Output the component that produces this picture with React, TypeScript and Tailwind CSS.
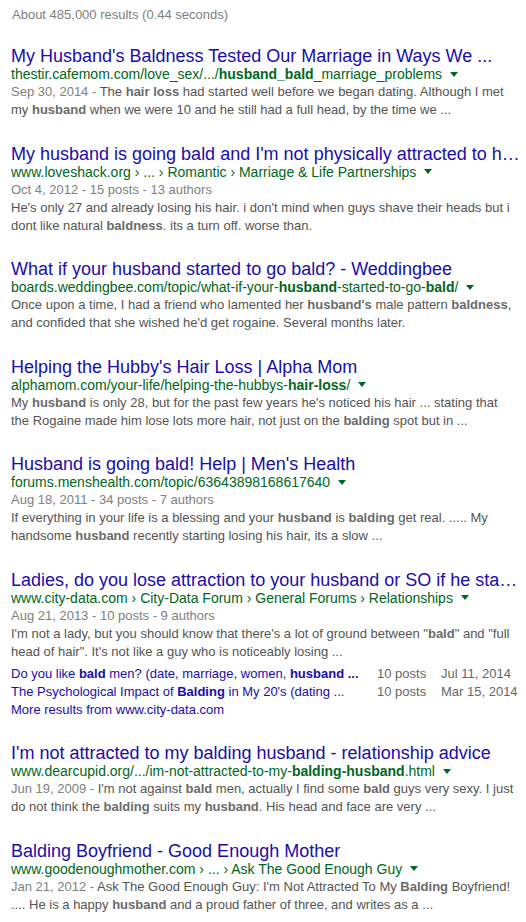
import React from "react";

type Seg = string | { b: string };

interface Result {
  title: string;
  url: Seg[];
  meta?: string;
  lines: Seg[][];
  date?: string;
  sitelinks?: { text: Seg[]; posts: string; date: string }[];
  more?: string;
}

const results: Result[] = [
  {
    title: "My Husband's Baldness Tested Our Marriage in Ways We ...",
    url: ["thestir.cafemom.com/love_sex/.../", { b: "husband_bald" }, "_marriage_problems"],
    date: "Sep 30, 2014 - ",
    lines: [
      ["The ", { b: "hair loss" }, " had started well before we began dating. Although I met"],
      ["my ", { b: "husband" }, " when we were 10 and he still had a full head, by the time we ..."],
    ],
  },
  {
    title: "My husband is going bald and I'm not physically attracted to h\u2026",
    url: ["www.loveshack.org \u203a ... \u203a Romantic \u203a Marriage & Life Partnerships"],
    meta: "Oct 4, 2012 - 15 posts - 13 authors",
    lines: [
      ["He's only 27 and already losing his hair. i don't mind when guys shave their heads but i"],
      ["dont like natural ", { b: "baldness" }, ". its a turn off. worse than."],
    ],
  },
  {
    title: "What if your husband started to go bald? - Weddingbee",
    url: ["boards.weddingbee.com/topic/what-if-your-", { b: "husband" }, "-started-to-go-", { b: "bald" }, "/"],
    lines: [
      ["Once upon a time, I had a friend who lamented her ", { b: "husband's" }, " male pattern ", { b: "baldness" }, ","],
      ["and confided that she wished he'd get rogaine. Several months later."],
    ],
  },
  {
    title: "Helping the Hubby's Hair Loss | Alpha Mom",
    url: ["alphamom.com/your-life/helping-the-hubbys-", { b: "hair-loss" }, "/"],
    lines: [
      ["My ", { b: "husband" }, " is only 28, but for the past few years he's noticed his hair ... stating that"],
      ["the Rogaine made him lose lots more hair, not just on the ", { b: "balding" }, " spot but in ..."],
    ],
  },
  {
    title: "Husband is going bald! Help | Men's Health",
    url: ["forums.menshealth.com/topic/63643898168617640"],
    meta: "Aug 18, 2011 - 34 posts - 7 authors",
    lines: [
      ["If everything in your life is a blessing and your ", { b: "husband" }, " is ", { b: "balding" }, " get real. ..... My"],
      ["handsome ", { b: "husband" }, " recently starting losing his hair, its a slow ..."],
    ],
  },
  {
    title: "Ladies, do you lose attraction to your husband or SO if he sta\u2026",
    url: ["www.city-data.com \u203a City-Data Forum \u203a General Forums \u203a Relationships"],
    meta: "Aug 21, 2013 - 10 posts - 9 authors",
    lines: [
      ["I'm not a lady, but you should know that there's a lot of ground between \"", { b: "bald" }, "\" and \"full"],
      ["head of hair\". It's not like a guy who is noticeably losing ..."],
    ],
    sitelinks: [
      {
        text: ["Do you like ", { b: "bald" }, " men? (date, marriage, women, ", { b: "husband ..." }],
        posts: "10 posts",
        date: "Jul 11, 2014",
      },
      {
        text: ["The Psychological Impact of ", { b: "Balding" }, " in My 20's (dating ..."],
        posts: "10 posts",
        date: "Mar 15, 2014",
      },
    ],
    more: "More results from www.city-data.com",
  },
  {
    title: "I'm not attracted to my balding husband - relationship advice",
    url: ["www.dearcupid.org/.../im-not-attracted-to-my-", { b: "balding-husband" }, ".html"],
    date: "Jun 19, 2009 - ",
    lines: [
      ["I'm not against ", { b: "bald" }, " men, actually I find some ", { b: "bald" }, " guys very sexy. I just"],
      ["do not think the ", { b: "balding" }, " suits my ", { b: "husband" }, ". His head and face are very ..."],
    ],
  },
  {
    title: "Balding Boyfriend - Good Enough Mother",
    url: ["www.goodenoughmother.com \u203a ... \u203a Ask The Good Enough Guy"],
    date: "Jan 21, 2012 - ",
    lines: [
      ["Ask The Good Enough Guy: I'm Not Attracted To My ", { b: "Balding" }, " Boyfriend!"],
      [".... He is a happy ", { b: "husband" }, " and a proud father of three, and writes as a ..."],
    ],
  },
];

// Render a list of plain / bold segments
const renderSegs = (segs: Seg[], boldClass: string) =>
  segs.map((s, i) =>
    typeof s === "string" ? (
      <React.Fragment key={i}>{s}</React.Fragment>
    ) : (
      <b key={i} className={boldClass}>
        {s.b}
      </b>
    )
  );

const ResultItem: React.FC<{ r: Result }> = ({ r }) => (
  <div className="mb-[25px]">
    <a className="block whitespace-nowrap text-[18px] leading-[18px] text-[#1a0dab]">{r.title}</a>
    <div className="whitespace-nowrap text-[14px] leading-[18px] text-[#006621]">
      {renderSegs(r.url, "font-bold")}
      <span className="ml-[8px] mb-[2px] inline-block align-middle border-t-[5px] border-x-[4px] border-t-[#006621] border-x-transparent" />
    </div>
    {r.meta && <div className="whitespace-nowrap text-[13px] leading-[18.2px] text-[#808080]">{r.meta}</div>}
    <div className="text-[13px] leading-[18.2px] text-[#545454]">
      {r.lines.map((line, i) => (
        <div key={i} className="whitespace-nowrap">
          {i === 0 && r.date && <span className="text-[#808080]">{r.date}</span>}
          {renderSegs(line, "font-bold text-[#6a6a6a]")}
        </div>
      ))}
    </div>
    {r.sitelinks && (
      <div className="mt-[4px] text-[13px] leading-[18px]">
        {r.sitelinks.map((s, i) => (
          <div key={i} className="grid grid-cols-[366px_64px_1fr] whitespace-nowrap">
            <a className="text-[#1a0dab]">{renderSegs(s.text, "font-bold")}</a>
            <span className="text-[#666666]">{s.posts}</span>
            <span className="text-[#666666]">{s.date}</span>
          </div>
        ))}
        <a className="block text-[#1a0dab]">{r.more}</a>
      </div>
    )}
  </div>
);

export default function App() {
  return (
    <div className="min-h-screen w-[526px] overflow-hidden bg-white pl-[11px] pt-[6px] font-['Liberation_Sans',Arial,sans-serif]">
      <div className="mb-[23px] text-[13px] leading-[18.2px] text-[#808080] pl-[1px]">
        About 485,000 results (0.44 seconds)
      </div>
      {results.map((r, i) => (
        <ResultItem key={i} r={r} />
      ))}
    </div>
  );
}
